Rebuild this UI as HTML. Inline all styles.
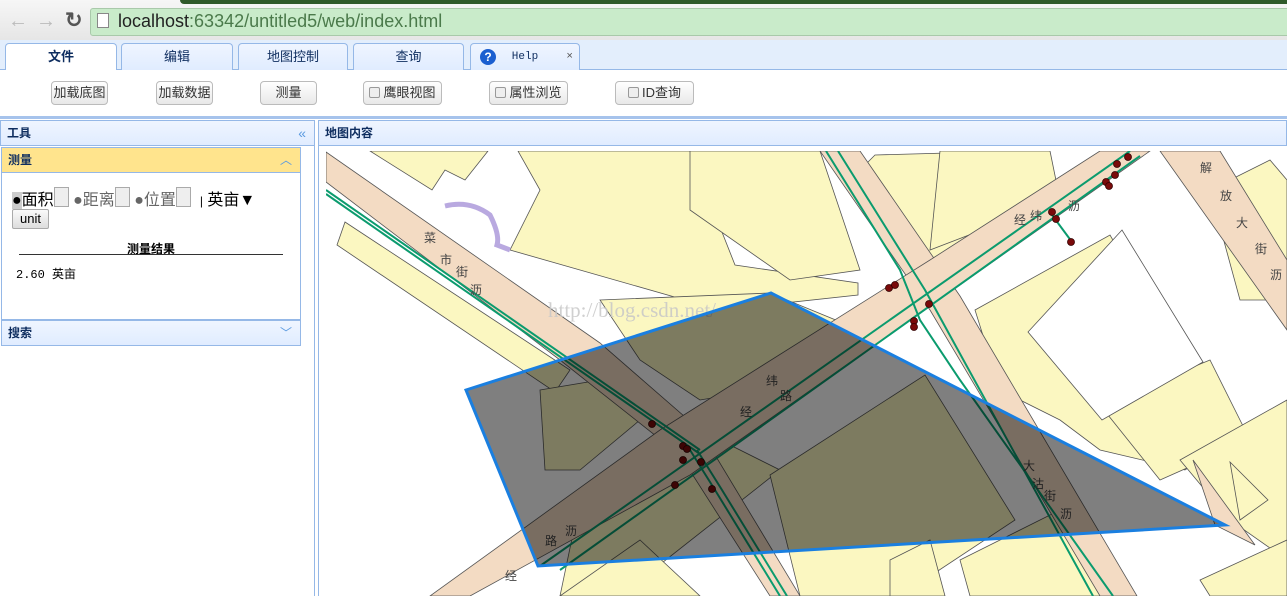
<!DOCTYPE html>
<html><head><meta charset="utf-8"><style>
*{margin:0;padding:0;box-sizing:border-box}
body{width:1287px;height:596px;overflow:hidden;background:#fff;font-family:"Liberation Sans","Noto Sans CJK SC",sans-serif;font-size:12px;position:relative}
.abs{position:absolute}
.tab{position:absolute;top:43px;height:27px;border:1px solid #95b8e7;border-bottom:none;border-radius:4px 4px 0 0;background:linear-gradient(#eff5ff,#e0ecff);color:#0e2d5f;text-align:center;line-height:26px;font-size:13px}
.btn{position:absolute;top:81px;height:24px;border:1px solid #bbb;border-radius:4px;background:linear-gradient(#fff,#e8e8e8);font-size:13px;line-height:22px;text-align:center;color:#333}
.cb{display:inline-block;width:11px;height:11px;border:1px solid #999;border-radius:2px;background:#eee;vertical-align:-1px;margin-right:3px}
.ph{position:absolute;height:26px;background:linear-gradient(#eff5ff,#e0ecff);border:1px solid #95b8e7;font-weight:bold;color:#0e2d5f;font-size:12px;line-height:24px;padding-left:6px}
</style></head><body>
<div class="abs" style="left:0;top:0;width:1287px;height:40px;background:linear-gradient(#f6f6f6,#e6e6e6)"></div>
<div class="abs" style="left:180px;top:0;width:1107px;height:4px;background:#2f5a2a;border-radius:0 0 0 6px"></div>
<div class="abs" style="left:8px;top:10px;font-size:20px;color:#bbb">&#8592;</div>
<div class="abs" style="left:36px;top:10px;font-size:20px;color:#bbb">&#8594;</div>
<div class="abs" style="left:65px;top:8px;font-size:21px;color:#555;font-weight:bold">&#8635;</div>
<div class="abs" style="left:90px;top:8px;width:1200px;height:28px;background:#c9ebca;border:1px solid #a9c9aa;border-radius:3px"></div>
<div class="abs" style="left:97px;top:13px;width:12px;height:15px;border:1px solid #888;background:#fff"></div>
<div class="abs" style="left:118px;top:11px;font-size:18px;color:#222">localhost<span style="color:#4b7a4b">:63342/untitled5/web/index.html</span></div>
<div class="abs" style="left:0;top:40px;width:1287px;height:30px;background:#e3eefc;border-bottom:1px solid #95b8e7"></div>
<div class="tab" style="left:5px;width:112px;background:#fff;height:28px;font-weight:bold">文件</div>
<div class="tab" style="left:121px;width:112px">编辑</div>
<div class="tab" style="left:238px;width:110px">地图控制</div>
<div class="tab" style="left:353px;width:111px">查询</div>
<div class="tab" style="left:470px;width:110px;font-family:'Liberation Mono',monospace;font-size:11px"><span style="position:absolute;left:9px;top:5px;width:16px;height:16px;border-radius:50%;background:#1b5fd0;color:#fff;font-weight:bold;font-size:12px;line-height:16px;font-family:'Liberation Sans'">?</span>Help<span style="position:absolute;right:6px;color:#555">×</span></div>
<div class="abs" style="left:0;top:70px;width:1287px;height:49px;background:#fff;border-bottom:3px solid #a6c3ec"></div>
<div class="btn" style="left:51px;width:57px">加载底图</div>
<div class="btn" style="left:156px;width:57px">加载数据</div>
<div class="btn" style="left:260px;width:57px">测量</div>
<div class="btn" style="left:363px;width:79px"><span class="cb"></span>鹰眼视图</div>
<div class="btn" style="left:489px;width:79px"><span class="cb"></span>属性浏览</div>
<div class="btn" style="left:615px;width:79px"><span class="cb"></span>ID查询</div>
<div class="abs" style="left:0;top:120px;width:315px;height:476px;border-right:1px solid #95b8e7;background:#fff"></div>
<div class="ph" style="left:0;top:120px;width:315px">工具<span style="position:absolute;right:8px;color:#5a9ae0;font-weight:normal;font-size:14px">«</span></div>
<div class="ph" style="left:1px;top:147px;width:300px;background:#ffe48d;border-color:#95b8e7">测量<span style="position:absolute;right:8px;color:#5a9ae0;font-weight:normal">︿</span></div>
<div class="abs" style="left:1px;top:173px;width:300px;height:147px;border:1px solid #95b8e7;border-top:none"></div>
<div class="abs" style="left:12px;top:186px;font-size:16px;color:#000;white-space:nowrap">
<span style="background:#ccc">●</span>面积<span style="display:inline-block;width:15px;height:20px;border:1px solid #aaa;background:#eee;vertical-align:-2px"></span> <span style="color:#666">●距离</span><span style="display:inline-block;width:15px;height:20px;border:1px solid #aaa;background:#eee;vertical-align:-2px"></span> <span style="color:#666">●位置</span><span style="display:inline-block;width:15px;height:20px;border:1px solid #aaa;background:#eee;vertical-align:-2px"></span> &nbsp;<span style="font-size:12px">|</span> 英亩▼</div>
<div class="abs" style="left:12px;top:209px;width:37px;height:20px;border:1px solid #aaa;border-radius:2px;background:linear-gradient(#fafafa,#ddd);font-size:13px;line-height:18px;text-align:center">unit</div>
<div class="abs" style="left:127px;top:240px;font-weight:bold;font-size:12px">测量结果</div>
<div class="abs" style="left:19px;top:254px;width:264px;border-top:1px solid #333"></div>
<div class="abs" style="left:16px;top:265px;font-size:12px;font-family:'Liberation Mono','Noto Sans CJK SC',monospace">2.60 英亩</div>
<div class="ph" style="left:1px;top:320px;width:300px">搜索<span style="position:absolute;right:8px;color:#5a9ae0;font-weight:normal">﹀</span></div>
<div class="ph" style="left:318px;top:120px;width:969px">地图内容</div>
<div class="abs" style="left:318px;top:146px;width:969px;height:450px;border-left:1px solid #95b8e7"></div>
<svg class="abs" style="left:326px;top:151px" width="961" height="445" viewBox="326 151 961 445">
<rect x="326" y="151" width="961" height="445" fill="#fff"/>
<g fill="#fbf7c1" stroke="#555" stroke-width="0.8">
<polygon points="370,151 488,151 465,180 445,170 432,190"/>
<polygon points="345,222 570,370 555,392 337,245"/>
<polygon points="518,151 690,151 735,265 858,283 858,295 720,310 510,250 540,190"/>
<polygon points="690,151 820,151 860,270 790,280 690,210"/>
<polygon points="875,155 1020,151 1000,230 930,265 860,170"/>
<polygon points="940,151 1050,151 1060,200 930,250"/>
<polygon points="975,310 1110,235 1165,330 1200,390 1230,440 1185,470 1100,450 1060,420 1000,390"/>
<polygon points="1100,405 1210,360 1250,440 1160,480"/>
<polygon points="1210,190 1270,160 1287,180 1287,300 1240,300"/>
<polygon points="1180,460 1287,400 1287,560 1230,520"/>
<polygon points="1230,462 1268,500 1240,520"/>
<polygon points="600,300 770,293 860,330 760,390 700,400 640,360"/>
<polygon points="540,390 600,380 640,420 580,470 545,470"/>
<polygon points="580,500 700,430 780,470 620,596 560,596"/>
<polygon points="770,475 925,375 1015,520 900,596 800,596"/>
<polygon points="960,560 1060,510 1110,596 970,596"/>
<polygon points="560,596 640,540 700,596"/>
<polygon points="1200,580 1287,540 1287,596 1210,596"/>
<polygon points="890,560 930,540 945,596 890,596"/>
</g>
<polygon points="1028,332 1122,230 1203,362 1102,420" fill="#fff" stroke="#555" stroke-width="0.8"/>
<g fill="#f3dbc3" stroke="#555" stroke-width="0.8">
<polygon points="326,152 600,343 700,430 800,596 770,596 680,455 560,360 326,182"/>
<polygon points="820,151 860,151 960,296 1137,596 1100,596 930,310"/>
<polygon points="1100,151 1150,151 960,285 690,475 470,596 430,596 660,430 930,260"/>
<polygon points="1160,151 1220,151 1287,260 1287,330"/>
<polygon points="1193,460 1215,525 1255,545"/>
</g>
<path d="M445,206 Q470,200 490,215 Q500,235 497,245 L510,250" fill="none" stroke="#b9a9e0" stroke-width="5"/>
<g stroke="#0b9b6e" stroke-width="2" fill="none">
<path d="M326,190 L700,450"/><path d="M326,194 L700,454"/>
<path d="M826,151 L900,270 L920,320 L960,380 L1113,596"/>
<path d="M838,151 L925,290 L1093,596"/>
<path d="M1130,151 L540,566"/><path d="M1140,156 L560,570"/>
<path d="M690,450 L715,490 L780,596"/><path d="M697,450 L722,490 L787,596"/>
<path d="M1052,215 L1072,242"/>
</g>
<g fill="#7a0a0a" stroke="#300" stroke-width="0.8">
<circle cx="652" cy="424" r="3.5"/><circle cx="683" cy="446" r="3.5"/><circle cx="687" cy="449" r="3.5"/><circle cx="683" cy="460" r="3.5"/><circle cx="701" cy="462" r="3.5"/><circle cx="675" cy="485" r="3.5"/><circle cx="712" cy="489" r="3.5"/>
<circle cx="889" cy="288" r="3.5"/><circle cx="895" cy="285" r="3.5"/><circle cx="929" cy="304" r="3.5"/><circle cx="914" cy="321" r="3.5"/><circle cx="914" cy="327" r="3.5"/>
<circle cx="1052" cy="212" r="3.5"/><circle cx="1056" cy="219" r="3.5"/><circle cx="1071" cy="242" r="3.5"/>
<circle cx="1106" cy="182" r="3.5"/><circle cx="1109" cy="186" r="3.5"/><circle cx="1115" cy="175" r="3.5"/><circle cx="1117" cy="164" r="3.5"/><circle cx="1128" cy="157" r="3.5"/>
</g>
<g font-size="12" fill="#444" font-family="Liberation Sans,Noto Sans CJK SC,sans-serif">
<text x="424" y="242">菜</text><text x="440" y="264">市</text><text x="456" y="276">街</text><text x="470" y="294">沥</text>
<text x="1200" y="172">解</text><text x="1220" y="200">放</text><text x="1236" y="227">大</text><text x="1255" y="253">街</text><text x="1270" y="279">沥</text>
<text x="1014" y="224">经</text><text x="1030" y="220">纬</text><text x="1068" y="210">沥</text>
<text x="780" y="400">路</text><text x="766" y="385">纬</text><text x="740" y="416">经</text>
<text x="505" y="580">经</text><text x="545" y="545">路</text><text x="565" y="535">沥</text>
<text x="1023" y="470">大</text><text x="1032" y="488">沽</text><text x="1044" y="500">街</text><text x="1060" y="518">沥</text>
</g>
<text x="548" y="317" font-family="Liberation Serif,serif" font-size="21" fill="#c8c8c8" opacity="0.85">http://blog.csdn.net/</text>
<polygon points="466,390 771,293 1225,525 538,566" fill="rgba(0,0,0,0.5)" stroke="#1a7fe0" stroke-width="3"/>
</svg>
</body></html>
